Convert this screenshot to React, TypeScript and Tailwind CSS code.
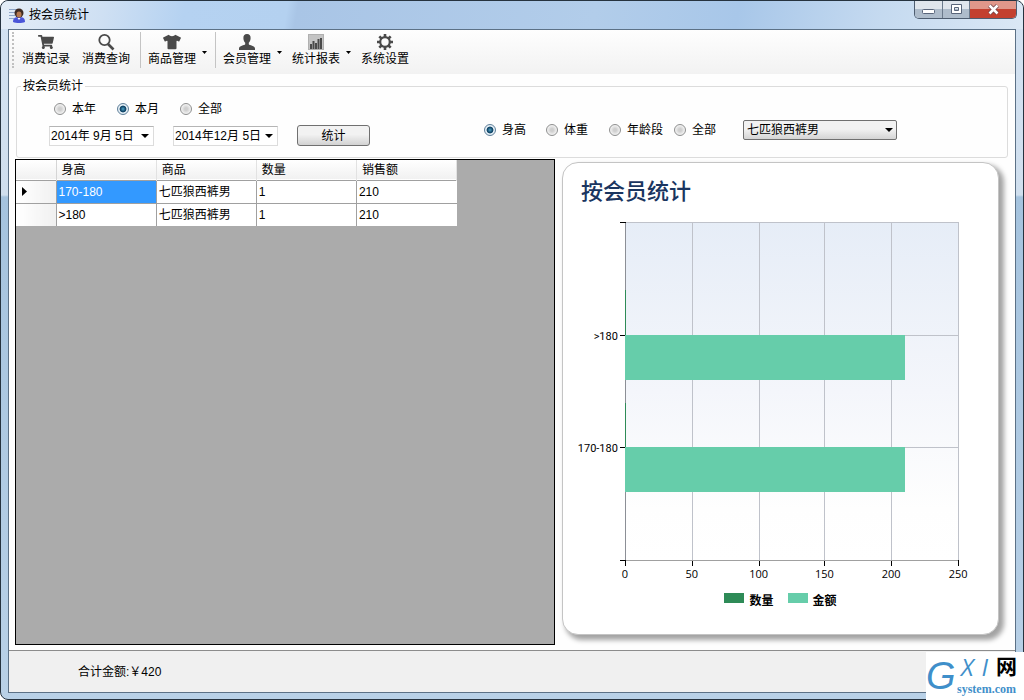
import React, { useState } from "react";
import { FaShoppingCart, FaTshirt } from "react-icons/fa";

const columns = ["身高", "商品", "数量", "销售额"];

const rows = [
  { height: "170-180", goods: "七匹狼西裤男", count: 1, amount: 210 },
  { height: ">180", goods: "七匹狼西裤男", count: 1, amount: 210 },
];

const SearchIcon = () => (
  <svg viewBox="0 0 18 18" className="size-[18px]" fill="none" stroke="#4a4a4a">
    <circle cx="7.5" cy="7" r="5.2" strokeWidth="1.8" />
    <path d="M11 11l5.500 5.500" strokeWidth="2.6" />
  </svg>
);

const PersonIcon = () => (
  <svg viewBox="0 0 18 18" className="size-[18px]" fill="#4a4a4a">
    <path d="M9 1c2.600 0 3.800 1.700 3.600 4.200-.1 2-.9 3.600-1.800 4.500v1.600c.5 1.200 6.200 1.300 6.200 4.200V17H1v-1.500c0-2.900 5.700-3 6.200-4.200V9.700C6.300 8.800 5.500 7.200 5.400 5.200 5.200 2.700 6.400 1 9 1z" />
  </svg>
);

const ReportIcon = () => (
  <svg viewBox="0 0 18 18" className="size-[18px]">
    <rect x="1.500" y="1.500" width="15" height="15" fill="#c4c4c4" stroke="#b0b0b0" />
    <path
      d="M3 11h2v5H3zM5.500 8h2v8h-2zM8 10h2v6H8zM10.500 6h2v10h-2zM13 5h2v11h-2z"
      fill="#4a4a4a"
    />
  </svg>
);

const GearIcon = () => (
  <svg viewBox="0 0 18 18" className="size-[18px]" fill="none" stroke="#4a4a4a">
    <circle cx="9" cy="9" r="4.800" strokeWidth="2.200" />
    <path
      d="M9 1v3M9 14v3M1 9h3M14 9h3M3.300 3.300l2.200 2.200M12.500 12.500l2.200 2.200M3.300 14.700l2.200-2.200M12.500 5.500l2.200-2.200"
      strokeWidth="2.600"
    />
  </svg>
);

const AppIcon = () => (
  <svg viewBox="0 0 16 16" className="size-4">
    <path d="M0 2h8v1H0zM0 5h6v1H0zM0 8h6v1H0zM0 11h5v1H0z" fill="#8fa6c8" />
    <path d="M4 15c0-4 2-5 6-5s6 1 6 5c-3 1.300-9 1.300-12 0z" fill="#4b56d8" />
    <circle cx="10" cy="6" r="4.500" fill="#3d2a22" />
    <ellipse cx="10" cy="7.500" rx="2.500" ry="3" fill="#b57950" />
    <path d="M8.500 11l1.500 2 1.500-2z" fill="#fff" />
  </svg>
);

const Arrow = () => (
  <svg viewBox="0 0 8 4" className="h-1 w-2 shrink-0" fill="#000">
    <path d="M0 0h8L4 4z" />
  </svg>
);

const Separator = () => <div className="mr-px ml-1 h-9 w-px bg-[#c4c4c4]" />;

interface ToolProps {
  icon: React.ReactNode;
  label: string;
  menu?: boolean;
}

function Tool({ icon, label, menu }: ToolProps) {
  return (
    <button type="button" className="flex items-center">
      <span className="flex w-[60px] flex-col items-center">
        {icon}
        <span className="leading-4">{label}</span>
      </span>
      {menu && (
        <svg viewBox="0 0 5 3" className="mt-1 mr-1 h-[3px] w-[5px]" fill="#000">
          <path d="M0 0h5L2.500 3z" />
        </svg>
      )}
    </button>
  );
}

interface RadioProps {
  name: string;
  label: string;
  value: string;
  onChange: (value: string) => void;
}

function Radio({ name, label, value, onChange }: RadioProps) {
  return (
    <label className="flex items-center gap-1.5 whitespace-nowrap">
      <input
        type="radio"
        name={name}
        checked={value === label}
        onChange={() => onChange(label)}
        className="size-3 shrink-0 appearance-none rounded-full border border-[#8e8f8f] bg-[radial-gradient(circle,#cfcfcf_20%,#f4f4f4_70%)] checked:border-[#5f7f99] checked:bg-[radial-gradient(circle_at_50%_50%,#4fa4c8_0%,#14496b_35%,#14496b_42%,#e4eef5_54%)]"
      />
      {label}
    </label>
  );
}

function DateBox({ label, date }: { label: string; date: string }) {
  return (
    <div className="flex h-5 w-[105px] items-center border border-[#dcdcdc] border-t-[#b5b5b5] bg-white">
      <input
        aria-label={label}
        defaultValue={date}
        className="w-[91px] min-w-0 pl-px outline-none"
      />
      <button type="button" aria-label={`${label}选择`}>
        <Arrow />
      </button>
    </div>
  );
}

const PLOT = { left: 62, right: 396, top: 12, bottom: 351 };
const BAR = 45;
const ticks = [0, 50, 100, 150, 200, 250];

function Chart() {
  const scale = (PLOT.right - PLOT.left) / 250;
  const step = (PLOT.bottom - PLOT.top) / 3;
  const x = (v: number) => Math.round(PLOT.left + v * scale);
  const y = (i: number) => Math.round(PLOT.bottom - (i + 1) * step);

  return (
    <svg viewBox="0 0 436 374" className="w-full" shapeRendering="crispEdges">
      <defs>
        <linearGradient id="plot" x1="0" y1="0" x2="0" y2="1">
          <stop offset="0" stopColor="#e6edf7" />
          <stop offset="0.5" stopColor="#f4f6fb" />
          <stop offset="0.85" stopColor="#fefefe" />
          <stop offset="1" stopColor="#ffffff" />
        </linearGradient>
      </defs>
      <rect
        x={PLOT.left}
        y={PLOT.top}
        width={PLOT.right - PLOT.left}
        height={PLOT.bottom - PLOT.top}
        fill="url(#plot)"
      />
      {ticks.map((t) => (
        <g key={t}>
          <path
            d={`M${x(t) + 0.5} ${PLOT.top}V${PLOT.bottom}`}
            stroke={t === 0 ? "#8c8f96" : "#bfc2ca"}
          />
          <path d={`M${x(t) + 0.5} ${PLOT.bottom}v6`} stroke="#000" />
          <text
            x={x(t)}
            y="369"
            textAnchor="middle"
            className="font-['Open_Sans','Noto_Sans',sans-serif] text-[11px] font-medium"
          >
            {t}
          </text>
        </g>
      ))}
      {[-1, 0, 1, 2].map((i) => (
        <g key={i}>
          <path
            d={`M${PLOT.left} ${y(i) + 0.5}H${PLOT.right}`}
            stroke={i === -1 ? "#a0a0a0" : "#bfc2ca"}
          />
          <path d={`M${PLOT.left - 5} ${y(i) + 0.5}h6`} stroke="#000" />
        </g>
      ))}
      {rows.map((r, i) => (
        <g key={r.height}>
          <rect
            x={PLOT.left}
            y={y(i) - BAR}
            width={r.count * scale}
            height={BAR}
            fill="#2e8b57"
          />
          <rect
            x={PLOT.left}
            y={y(i)}
            width={r.amount * scale}
            height={BAR}
            fill="#66cdaa"
          />
          <text
            x={PLOT.left - 7}
            y={y(i) + 5}
            textAnchor="end"
            className="font-[Roboto,sans-serif] text-[11px]"
          >
            {r.height}
          </text>
        </g>
      ))}
    </svg>
  );
}

export default function App() {
  const [period, setPeriod] = useState("本月");
  const [group, setGroup] = useState("身高");

  return (
    <div className="relative flex min-h-screen flex-col rounded-lg border border-[#26333f] bg-[linear-gradient(180deg,#d3e2f2_0,#d0dfee_194px,#a5c3de_196px,#b9d1e7_100%)] px-[7px] pb-1.5 font-['Liberation_Sans','Noto_Sans_CJK_SC',sans-serif] text-xs text-black">
      <header className="-mx-[7px] flex h-7 items-start justify-between rounded-t-lg bg-[linear-gradient(100deg,#e4edf7_0%,#cfe0f3_10%,#b5d2f1_18%,#b4d1f0_28%,#a9c5e6_29%,#b2cdea_58%,#a8c7e9_72%,#c5daf0_86%,#dbe8f5_100%)] pl-2">
        <div className="flex h-7 items-center gap-1">
          <AppIcon />
          <h1>按会员统计</h1>
        </div>
        <div className="mr-1.5 flex h-[18px] overflow-hidden rounded-b-[5px] border border-t-0 border-[#4e5d70]">
          <button
            type="button"
            aria-label="最小化"
            className="flex w-7 items-end justify-center border-r border-[#6b7a8c] bg-linear-to-b from-[#dfe5ec] from-45% to-[#aebccb] to-50% pb-[3px]"
          >
            <svg viewBox="0 0 13 6" className="h-1.5 w-[13px]">
              <rect x="0.500" y="0.500" width="12" height="4" rx="1" fill="#fff" stroke="#59657a" />
            </svg>
          </button>
          <button
            type="button"
            aria-label="最大化"
            className="flex w-[27px] items-center justify-center border-r border-[#6b7a8c] bg-linear-to-b from-[#dfe5ec] from-45% to-[#aebccb] to-50%"
          >
            <svg viewBox="0 0 13 11" className="h-[11px] w-[13px]">
              <path
                d="M1.500 .5h10v9h-10zM4.500 3.500v3h4v-3z"
                fill="#fff"
                fillRule="evenodd"
                stroke="#59657a"
              />
            </svg>
          </button>
          <button
            type="button"
            aria-label="关闭"
            className="flex w-[46px] items-center justify-center bg-linear-to-b from-[#e0978a] from-45% to-[#c3402f] to-50%"
          >
            <svg viewBox="0 0 13 11" className="h-[11px] w-[13px]">
              <path d="M2.500 1.500l8 8M10.500 1.500l-8 8" stroke="#6d4348" strokeWidth="4" />
              <path d="M2.500 1.500l8 8M10.500 1.500l-8 8" stroke="#fff" strokeWidth="2.500" />
            </svg>
          </button>
        </div>
      </header>

      <div className="flex flex-1 flex-col border border-[#5c7186] bg-[#fefefe]">
        <nav className="flex h-11 items-center bg-linear-to-b from-[#fefefe] to-[#f2f2f2] pb-1 pl-[3px]">
          <div className="mr-0.5 h-9 border-l-2 border-dotted border-[#c0c0c0]" />
          <Tool icon={<FaShoppingCart className="size-[18px] p-px text-[#4a4a4a]" />} label="消费记录" />
          <Tool icon={<SearchIcon />} label="消费查询" />
          <Separator />
          <Tool icon={<FaTshirt className="size-[18px] text-[#4a4a4a]" />} label="商品管理" menu />
          <Separator />
          <Tool icon={<PersonIcon />} label="会员管理" menu />
          <Tool icon={<ReportIcon />} label="统计报表" menu />
          <Tool icon={<GearIcon />} label="系统设置" />
        </nav>

        <fieldset className="mx-[7px] mt-0.5 h-[82px] rounded-[3px] border border-[#dcdcdc] pl-8">
          <legend className="-ml-7 px-0.5 leading-5">按会员统计</legend>
          <div className="flex items-start">
            <div className="flex flex-col gap-1.5 pt-[3px]">
              <div className="grid grid-cols-[63px_63px_63px] pl-[5px] leading-5">
                <Radio name="period" label="本年" value={period} onChange={setPeriod} />
                <Radio name="period" label="本月" value={period} onChange={setPeriod} />
                <Radio name="period" label="全部" value={period} onChange={setPeriod} />
              </div>
              <div className="flex items-center gap-[19px]">
                <DateBox label="开始日期" date="2014年 9月 5日" />
                <DateBox label="结束日期" date="2014年12月 5日" />
                <button
                  type="button"
                  className="h-[21px] w-[73px] rounded-[3px] border border-[#707070] bg-linear-to-b from-[#f2f2f2] from-45% to-[#d2d2d2]"
                >
                  统计
                </button>
              </div>
            </div>
            <div className="ml-[114px] grid grid-cols-[62px_63px_65px_69px_154px] items-center pt-6">
              <Radio name="group" label="身高" value={group} onChange={setGroup} />
              <Radio name="group" label="体重" value={group} onChange={setGroup} />
              <Radio name="group" label="年龄段" value={group} onChange={setGroup} />
              <Radio name="group" label="全部" value={group} onChange={setGroup} />
              <div className="relative">
                <select
                  aria-label="商品"
                  className="block h-5 w-full appearance-none rounded-[2px] border border-[#707070] bg-linear-to-b from-[#f2f2f2] from-45% to-[#d4d4d4] pl-[3px]"
                >
                  <option>七匹狼西裤男</option>
                </select>
                <span className="pointer-events-none absolute top-2 right-1 flex">
                  <Arrow />
                </span>
              </div>
            </div>
          </div>
        </fieldset>

        <main className="grid flex-1 grid-cols-[540fr_437fr] gap-[7px] pt-px pr-4 pb-[5px] pl-1.5">
          <section className="border border-black bg-[#ababab]">
            <table className="w-[441px] table-fixed border-collapse bg-white text-left">
              <thead>
                <tr className="h-5 border-b border-[#a0a0a0] bg-linear-to-b from-white to-[#f1f1f1]">
                  <th className="w-10 border-r border-[#d5d5d5]" />
                  {columns.map((c) => (
                    <th key={c} className="border-r border-[#e2e2e2] pl-[5px] leading-4 font-normal">
                      {c}
                    </th>
                  ))}
                </tr>
              </thead>
              <tbody>
                {rows.map((r, i) => (
                  <tr key={r.height} className="h-[23px] border-b border-[#a0a0a0] last:border-b-0">
                    <th className="border-r border-[#a0a0a0] bg-linear-to-r from-white to-[#f0f0f0] pl-1.5">
                      {i === 0 && (
                        <svg viewBox="0 0 5 9" className="h-[9px] w-[5px]" fill="#000">
                          <path d="M0 0l5 4.500L0 9z" />
                        </svg>
                      )}
                    </th>
                    <td
                      className={
                        i === 0
                          ? "border-r border-[#a0a0a0] bg-[#3399ff] pl-0.5 text-white"
                          : "border-r border-[#a0a0a0] pl-0.5"
                      }
                    >
                      {r.height}
                    </td>
                    <td className="border-r border-[#a0a0a0] pl-0.5">{r.goods}</td>
                    <td className="border-r border-[#a0a0a0] pl-0.5">{r.count}</td>
                    <td className="pl-0.5">{r.amount}</td>
                  </tr>
                ))}
              </tbody>
            </table>
          </section>

          <section className="mt-[3px] mb-2.5 rounded-2xl border border-[#c4c4c4] bg-white shadow-[4px_4px_5px_1px_#a3a3a3]">
            <h2 className="h-[47px] pt-3 pl-[18px] font-['Noto_Sans_CJK_SC',sans-serif] text-[22px] leading-7 font-medium text-[#1a3560]">
              按会员统计
            </h2>
            <Chart />
            <div className="mt-2.5 flex justify-center gap-3.5 leading-4 font-bold">
              <div className="flex items-start gap-[5px]">
                <span className="h-2.5 w-5 bg-[#2e8b57]" />
                数量
              </div>
              <div className="flex items-start gap-[5px]">
                <span className="h-2.5 w-5 bg-[#66cdaa]" />
                金额
              </div>
            </div>
          </section>
        </main>

        <footer className="flex h-[42px] items-center border-t border-[#8c8c8c] bg-[#f0f0f0] pl-[69px]">
          合计金额:￥420
        </footer>
      </div>

      <div className="absolute -right-px -bottom-px flex h-12 w-[98px] items-center gap-px bg-white text-[#3f8fca]">
        <span className="w-[30px] font-['Liberation_Sans',sans-serif] text-[38px] leading-[48px] italic">
          G
        </span>
        <div className="flex flex-col gap-0.5">
          <div className="flex items-center gap-2 pl-1 text-2xl leading-6 italic">
            <span className="font-['Open_Sans',sans-serif]">X</span>
            <span className="font-['Open_Sans',sans-serif]">I</span>
            <span className="text-[21px] font-bold text-black not-italic">网</span>
          </div>
          <span className="font-['Liberation_Serif',serif] text-xs leading-4 font-bold">
            system.com
          </span>
        </div>
      </div>
    </div>
  );
}
